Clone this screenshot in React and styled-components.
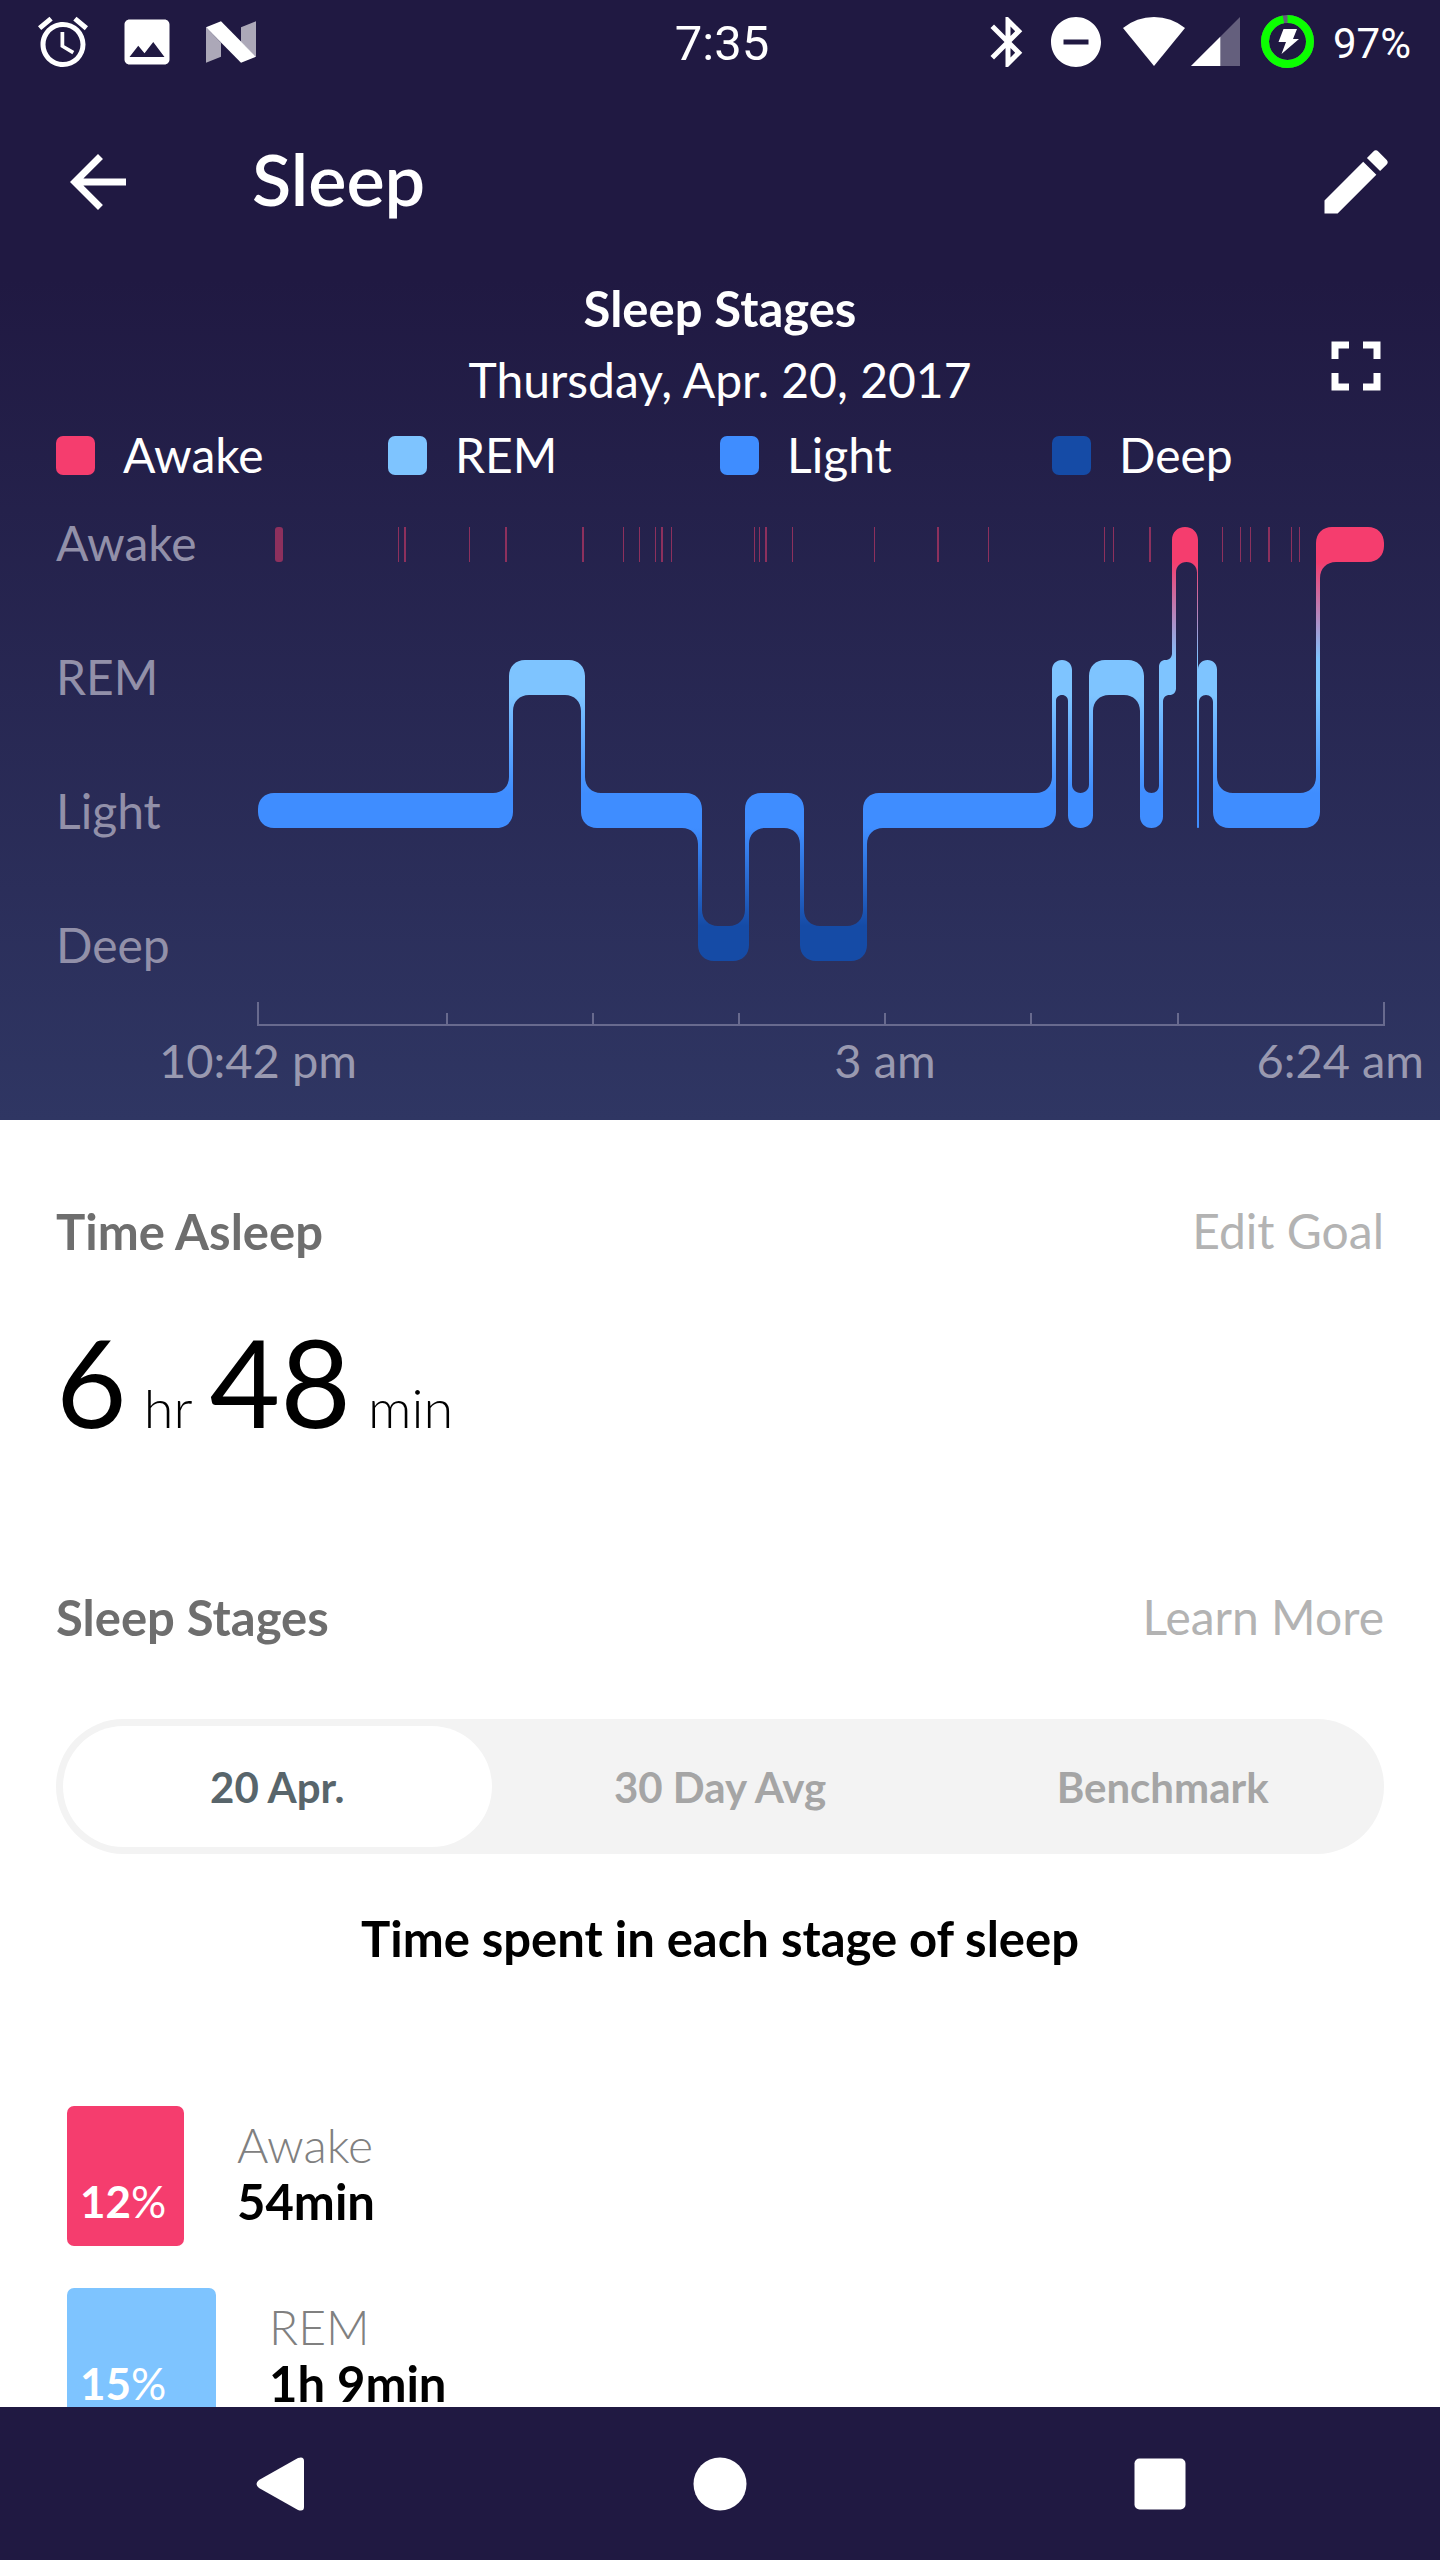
import React, { useState } from 'react'
import styled, { createGlobalStyle } from 'styled-components'
import { MdAlarm, MdArrowBack, MdBluetooth, MdDoNotDisturbOn, MdEdit, MdFullscreen, MdImage } from 'react-icons/md'

const colors = {
    navy: '#201942',
    awake: '#f53d6e',
    rem: '#7ec4ff',
    light: '#3f8dff',
    deep: '#154ba6',
};

const stages = [
    { id: 'awake', name: 'Awake' },
    { id: 'rem', name: 'REM' },
    { id: 'light', name: 'Light' },
    { id: 'deep', name: 'Deep' },
];

// [stage, start, end], the overlap of two neighbours is the connector
const segments = [
    ['light', 0, 255],
    ['rem', 251, 327],
    ['light', 323, 444],
    ['deep', 440, 491],
    ['light', 487, 546],
    ['deep', 542, 609],
    ['light', 605, 798],
    ['rem', 794, 814],
    ['light', 810, 835],
    ['rem', 831, 886],
    ['light', 882, 905],
    ['rem', 901, 918],
    ['awake', 914, 940],
    ['light', 939, 941],
    ['rem', 940, 959],
    ['light', 955, 1062],
    ['awake', 1058, 1126],
];

const shortWakes = [
    [140, 1], [146, 2], [211, 1], [247, 2], [324, 2], [365, 1], [381, 1], [397, 1], [403, 2], [413, 1],
    [496, 1], [501, 1], [507, 2], [534, 1], [616, 1], [679, 2], [730, 1],
    [846, 1], [855, 1], [891, 2], [964, 1], [982, 1], [992, 1], [1010, 2], [1033, 1], [1041, 1],
];

const hourTicks = [189, 335, 481, 627, 773, 920];

const breakdown = [
    { id: 'awake', name: 'Awake', percent: 12, time: '54min' },
    { id: 'rem', name: 'REM', percent: 15, time: '1h 9min' },
];

const tabs = ['20 Apr.', '30 Day Avg', 'Benchmark'];

const BAR = 35;
const STEP = 133;
const RADIUS = 16;

const stageTop = (id) => stages.findIndex((s) => s.id === id) * STEP;

// one closed outline: along the top edges, then back along the bottom ones
const outline = () => {
    const top = [];
    const bottom = [];
    segments.forEach(([id, x0, x1], i) => {
        const y = stageTop(id);
        if (i === 0) {
            top.push([x0, y]);
            bottom.push([x0, y + BAR]);
        }
        const next = segments[i + 1];
        if (!next) {
            top.push([x1, y]);
            bottom.push([x1, y + BAR]);
            return;
        }
        const nextY = stageTop(next[0]);
        const up = nextY < y;
        const topX = up ? next[1] : x1;
        const bottomX = up ? x1 : next[1];
        top.push([topX, y], [topX, nextY]);
        bottom.push([bottomX, y + BAR], [bottomX, nextY + BAR]);
    });
    return [...top, ...bottom.reverse()];
};

const roundedPath = (points) => {
    const toward = (a, b, dist) => {
        const len = Math.hypot(b[0] - a[0], b[1] - a[1]) || 1;
        return [a[0] + ((b[0] - a[0]) * dist) / len, a[1] + ((b[1] - a[1]) * dist) / len];
    };
    const parts = points.map((p, i) => {
        const prev = points[(i + points.length - 1) % points.length];
        const next = points[(i + 1) % points.length];
        const r = Math.min(
            RADIUS,
            Math.hypot(p[0] - prev[0], p[1] - prev[1]) / 2,
            Math.hypot(p[0] - next[0], p[1] - next[1]) / 2
        );
        const from = toward(p, prev, r);
        const to = toward(p, next, r);
        const c1 = toward(p, prev, r * 0.42);
        const c2 = toward(p, next, r * 0.42);
        return `${i ? 'L' : 'M'}${from} C${c1} ${c2} ${to}`;
    });
    return `${parts.join(' ')}Z`;
};

const hypnogram = roundedPath(outline());

function AndroidN() {
    return (
        <svg width="60" height="60" viewBox="0 0 60 60" aria-hidden="true">
            <path d="M5 15.3V50.7L20 44.7V30.7ZM40 15.3L55 9.3V44.7L40 30Z" fill="#aca8b8" />
            <path d="M5 15.3L20 9.3L55 44.7L40 50.7Z" fill="#fff" />
        </svg>
    )
}

function Network() {
    return (
        <svg width="139" height="60" viewBox="0 0 139 60" aria-hidden="true">
            <path d="M9 16A49 49 0 0 1 71 16L40 54Z" fill="#fff" />
            <path d="M126 5V54H77Z" fill="#645f7d" />
            <path d="M106.300 24.700V54H77Z" fill="#fff" />
        </svg>
    )
}

function Battery() {
    return (
        <svg width="53" height="60" viewBox="0 0 53 60" aria-hidden="true">
            <circle cx="26.500" cy="29.500" r="22.500" fill="none" stroke="#645f7d" strokeWidth="8" />
            <circle
                cx="26.500" cy="29.500" r="22.500" fill="none" stroke="#0bff00" strokeWidth="8"
                pathLength="100" strokeDasharray="97 3" transform="rotate(-90 26.500 29.500)"
            />
            <path d="M22.500 17H36L32 27H38L20.500 42L25 30H17.500Z" fill="#fff" />
        </svg>
    )
}

function SleepChart() {
    return (
        <ChartSvg viewBox="0 0 1127 499" preserveAspectRatio="none" role="img" aria-label="Sleep stages through the night">
            <defs>
                <linearGradient id="stageFill" gradientUnits="userSpaceOnUse" x1="0" y1="0" x2="0" y2="434">
                    <stop offset={BAR / 434} stopColor={colors.awake} />
                    <stop offset={STEP / 434} stopColor={colors.rem} />
                    <stop offset={(STEP + BAR) / 434} stopColor={colors.rem} />
                    <stop offset={(STEP * 2) / 434} stopColor={colors.light} />
                    <stop offset={(STEP * 2 + BAR) / 434} stopColor={colors.light} />
                    <stop offset={(STEP * 3) / 434} stopColor={colors.deep} />
                </linearGradient>
            </defs>
            <g fill={colors.awake} fillOpacity="0.5">
                <rect x="17" y="0" width="8" height={BAR} rx="3" />
                {shortWakes.map(([x, w]) => (
                    <rect key={x} x={x} y="0" width={w} height={BAR} />
                ))}
            </g>
            <path d={hypnogram} fill="url(#stageFill)" />
            <g fill="#686a8e">
                <rect x="-1" y="497" width="1128" height="2" />
                <rect x="-1" y="475" width="2" height="22" />
                <rect x="1125" y="475" width="2" height="22" />
                {hourTicks.map((x) => (
                    <rect key={x} x={x - 1} y="486" width="2" height="11" />
                ))}
            </g>
        </ChartSvg>
    )
}

export default function App() {
    const [currentTab, setCurrentTab] = useState(0);

    return (
        <>
            <GlobalStyle />
            <Screen>
                <StatusBar>
                    <StatusIcons $gap={24}>
                        <MdAlarm />
                        <MdImage />
                        <AndroidN />
                    </StatusIcons>
                    <Clock>7:35</Clock>
                    <StatusIcons $gap={8} $end>
                        <MdBluetooth />
                        <MdDoNotDisturbOn />
                        <Network />
                        <Battery />
                        <BatteryLevel>97%</BatteryLevel>
                    </StatusIcons>
                </StatusBar>
                <AppBar>
                    <IconButton aria-label="Back"><MdArrowBack /></IconButton>
                    <Title>Sleep</Title>
                    <IconButton aria-label="Edit"><MdEdit /></IconButton>
                </AppBar>
                <Scroller>
                    <ChartPanel>
                        <ChartHeader>
                            <div>
                                <ChartTitle>Sleep Stages</ChartTitle>
                                <ChartDate>Thursday, Apr. 20, 2017</ChartDate>
                            </div>
                            <IconButton aria-label="Full screen"><MdFullscreen /></IconButton>
                        </ChartHeader>
                        <Legend>
                            {stages.map((stage) => (
                                <LegendItem key={stage.id} $color={colors[stage.id]}>{stage.name}</LegendItem>
                            ))}
                        </Legend>
                        <ChartBody>
                            <StageLabels>
                                {stages.map((stage) => (
                                    <span key={stage.id}>{stage.name}</span>
                                ))}
                            </StageLabels>
                            <SleepChart />
                        </ChartBody>
                        <TimeLabels>
                            <span>10:42 pm</span>
                            <span>3 am</span>
                            <LastTime>6:24 am</LastTime>
                        </TimeLabels>
                    </ChartPanel>
                    <Content>
                        <SectionHeader>
                            <SectionTitle>Time Asleep</SectionTitle>
                            <SectionLink href="#goal">Edit Goal</SectionLink>
                        </SectionHeader>
                        <Duration>
                            6<Unit>hr</Unit>48<Unit>min</Unit>
                        </Duration>
                        <SectionHeader>
                            <SectionTitle>Sleep Stages</SectionTitle>
                            <SectionLink href="#learn">Learn More</SectionLink>
                        </SectionHeader>
                        <Tabs role="tablist">
                            {tabs.map((tab, index) => (
                                <Tab
                                    key={tab}
                                    role="tab"
                                    aria-selected={index === currentTab}
                                    $active={index === currentTab}
                                    onClick={() => setCurrentTab(index)}
                                >
                                    {tab}
                                </Tab>
                            ))}
                        </Tabs>
                        <Caption>Time spent in each stage of sleep</Caption>
                        <StageList>
                            {breakdown.map((stage) => (
                                <StageRow key={stage.id}>
                                    <StageBar $color={colors[stage.id]} $wide={stage.percent > 12}>
                                        {stage.percent}<span>%</span>
                                    </StageBar>
                                    <StageInfo>
                                        <StageName>{stage.name}</StageName>
                                        <StageTime>{stage.time}</StageTime>
                                    </StageInfo>
                                </StageRow>
                            ))}
                        </StageList>
                    </Content>
                </Scroller>
                <NavBar>
                    <NavButton aria-label="Back">
                        <svg width="54" height="54" viewBox="0 0 54 54">
                            <path d="M6 23L45 1Q51 -1 51 4V50Q51 55 45 53L6 31Q1 27 6 23Z" fill="#fff" />
                        </svg>
                    </NavButton>
                    <NavButton aria-label="Home">
                        <svg width="54" height="54" viewBox="0 0 54 54">
                            <circle cx="27" cy="27" r="26.500" fill="#fff" />
                        </svg>
                    </NavButton>
                    <NavButton aria-label="Overview">
                        <svg width="54" height="54" viewBox="0 0 54 54">
                            <rect x="1.500" y="1.500" width="51" height="51" rx="5" fill="#fff" />
                        </svg>
                    </NavButton>
                </NavBar>
            </Screen>
        </>
    )
}

const GlobalStyle = createGlobalStyle`
  * {
    box-sizing: border-box;
    margin: 0;
    padding: 0;
  }
  body {
    background-color: #fff;
    font-family: Lato, "Liberation Sans", sans-serif;
    font-size: 48px;
    line-height: 56px;
  }
  button {
    border: none;
    background: none;
    font-family: inherit;
    cursor: pointer;
  }
  svg {
    display: block;
    flex-shrink: 0;
  }
`;

const Screen = styled.div`
  display: flex;
  flex-direction: column;
  height: 100vh;
`;

const StatusBar = styled.div`
  display: grid;
  grid-template-columns: 1fr auto 1fr;
  align-items: center;
  height: 84px;
  padding: 0 29px 0 33px;
  background-color: ${colors.navy};
  color: #fff;
  font-family: Roboto, sans-serif;
`;

const StatusIcons = styled.div`
  display: flex;
  align-items: center;
  justify-content: ${({ $end }) => ($end ? 'flex-end' : 'flex-start')};
  gap: ${({ $gap }) => $gap}px;
  font-size: 60px;
`;

const Clock = styled.time`
  padding-top: 4px;
  font-size: 49px;
`;

const BatteryLevel = styled.span`
  margin-left: 11px;
  padding-top: 4px;
  font-size: 42px;
`;

const AppBar = styled.header`
  display: flex;
  align-items: center;
  height: 196px;
  padding: 0 42px 0 56px;
  background-color: ${colors.navy};
  color: #fff;
`;

const IconButton = styled.button`
  width: 84px;
  height: 84px;
  color: #fff;
  font-size: 84px;
`;

const Title = styled.h1`
  flex: 1;
  padding: 0 0 8px 112px;
  font-size: 72px;
  font-weight: 600;
  line-height: 84px;
`;

const Scroller = styled.main`
  flex: 1;
  min-height: 0;
  overflow-y: auto;
  scrollbar-width: none;
`;

const ChartPanel = styled.section`
  padding-bottom: 32px;
  background: linear-gradient(${colors.navy}, #2f3663);
  color: #fff;
`;

const ChartHeader = styled.div`
  display: grid;
  grid-template-columns: 1fr 84px;
  align-items: end;
  padding: 0 42px 0 126px;
  text-align: center;
`;

const ChartTitle = styled.h2`
  margin-bottom: 16px;
  font-size: 49px;
  font-weight: 700;
`;

const ChartDate = styled.p`
  font-size: 48px;
`;

const Legend = styled.ul`
  display: grid;
  grid-template-columns: repeat(4, 1fr);
  margin-top: 19px;
  padding: 0 56px;
  list-style: none;
`;

const LegendItem = styled.li`
  display: flex;
  align-items: center;
  gap: 28px;
  &::before {
    content: "";
    width: 39px;
    height: 39px;
    border-radius: 7px;
    background-color: ${({ $color }) => $color};
  }
`;

const ChartBody = styled.div`
  display: grid;
  grid-template-columns: 202px 1fr;
  margin-top: 44px;
  padding: 0 55px 0 56px;
`;

const StageLabels = styled.div`
  display: flex;
  flex-direction: column;
  gap: 102px;
  color: #9290a9;
  line-height: 32px;
`;

const ChartSvg = styled.svg`
  width: 100%;
  height: 499px;
  overflow: visible;
`;

const TimeLabels = styled.div`
  display: grid;
  grid-template-columns: 516px 1fr 186px;
  margin-top: 6px;
  color: #9999b0;
  font-size: 47px;
  text-align: center;
`;

const LastTime = styled.span`
  justify-self: end;
  padding-right: 16px;
  white-space: nowrap;
`;

const Content = styled.section`
  padding: 83px 56px 0;
`;

const SectionHeader = styled.div`
  display: flex;
  justify-content: space-between;
`;

const SectionTitle = styled.h2`
  color: #6e6e6e;
  font-size: 49px;
  font-weight: 700;
`;

const SectionLink = styled.a`
  color: #b3b3b3;
  text-decoration: none;
`;

const Duration = styled.p`
  display: flex;
  align-items: baseline;
  margin: 62px 0 148px;
  font-size: 122px;
  line-height: 120px;
`;

const Unit = styled.span`
  margin: 0 17px;
  font-size: 54px;
  font-weight: 300;
  line-height: 56px;
`;

const Tabs = styled.div`
  display: grid;
  grid-template-columns: repeat(3, 1fr);
  height: 135px;
  margin-top: 74px;
  border-radius: 68px;
  background-color: #f3f3f3;
`;

const Tab = styled.button`
  margin: 7px;
  border-radius: 61px;
  background-color: ${({ $active }) => ($active ? '#fff' : 'transparent')};
  color: ${({ $active }) => ($active ? '#58656b' : '#a5a5a5')};
  font-size: 42px;
  font-weight: 700;
`;

const Caption = styled.h3`
  margin: 56px 0 140px;
  font-size: 49px;
  font-weight: 700;
  text-align: center;
`;

const StageList = styled.ul`
  display: flex;
  flex-direction: column;
  gap: 42px;
  padding-left: 11px;
  list-style: none;
`;

const StageRow = styled.li`
  display: flex;
  gap: 53px;
`;

const StageBar = styled.div`
  display: flex;
  align-items: flex-end;
  width: ${({ $wide }) => ($wide ? 149 : 117)}px;
  height: 140px;
  padding: 0 0 17px 13px;
  border-radius: 7px;
  background-color: ${({ $color }) => $color};
  color: #fff;
  font-size: 44px;
  font-weight: 700;
  span {
    font-weight: 400;
  }
`;

const StageInfo = styled.div`
  padding-top: 11px;
`;

const StageName = styled.p`
  color: #808080;
  font-weight: 300;
`;

const StageTime = styled.p`
  font-size: 49px;
  font-weight: 700;
`;

const NavBar = styled.nav`
  display: grid;
  grid-template-columns: repeat(3, 1fr);
  height: 153px;
  padding: 0 60px;
  background-color: ${colors.navy};
`;

const NavButton = styled.button`
  display: flex;
  align-items: center;
  justify-content: center;
`;
